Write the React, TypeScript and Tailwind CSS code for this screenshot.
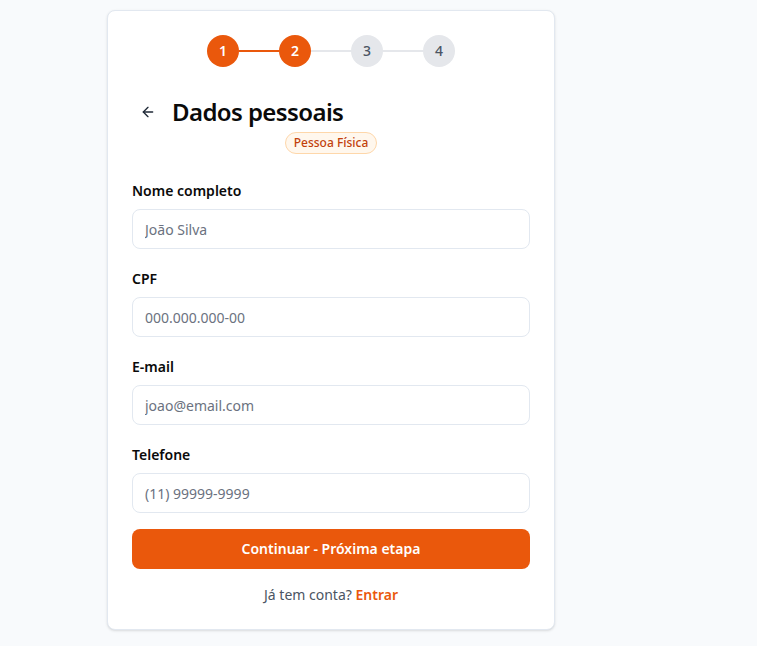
import { ArrowLeft } from "lucide-react";

const fields = [
  { label: "Nome completo", placeholder: "João Silva", type: "text" },
  { label: "CPF", placeholder: "000.000.000-00", type: "text" },
  { label: "E-mail", placeholder: "joao@email.com", type: "email" },
  { label: "Telefone", placeholder: "(11) 99999-9999", type: "tel" },
];

function Stepper({ current }: { current: number }) {
  const steps = [1, 2, 3, 4];
  return (
    <div className="flex items-center justify-center">
      {steps.map((s, i) => {
        const done = s <= current;
        return (
          <div key={s} className="flex items-center">
            <div
              className={
                done
                  ? "flex h-8 w-8 items-center justify-center rounded-full bg-[#ea580c] text-sm font-semibold text-white"
                  : "flex h-8 w-8 items-center justify-center rounded-full bg-[#e5e7eb] text-sm font-medium text-[#4b5563]"
              }
            >
              {s}
            </div>
            {i < steps.length - 1 ? (
              <div className={s < current ? "h-0.5 w-10 bg-[#ea580c]" : "h-0.5 w-10 bg-[#e5e7eb]"} />
            ) : null}
          </div>
        );
      })}
    </div>
  );
}

export default function App() {
  return (
    <div
      className="min-h-screen bg-[#f8fafc] pt-[10px] pl-[107px]"
      style={{ fontFamily: '"Noto Sans", "Open Sans", sans-serif' }}
    >
      <div className="w-[448px] rounded-lg border border-[#e2e8f0] bg-white p-6 shadow-sm">
        <Stepper current={2} />

        <div className="mt-[29px] flex items-center gap-2">
          <button className="flex h-8 w-8 items-center justify-center rounded-md text-[#1f2937]">
            <ArrowLeft className="h-4 w-4" strokeWidth={2} />
          </button>
          <h1 className="text-2xl font-semibold tracking-tight text-[#0a0a0a]">Dados pessoais</h1>
        </div>
        <div className="mt-[4px] flex justify-center">
          <span className="rounded-full border border-[#fed7aa] bg-[#fff7ed] px-2 py-0.5 text-xs font-medium text-[#c2410c]">
            Pessoa Física
          </span>
        </div>

        <form className="mt-[27px] flex flex-col gap-5" onSubmit={(e) => e.preventDefault()}>
          {fields.map((f) => (
            <div key={f.label}>
              <label className="mb-2 block text-sm font-semibold text-[#0a0a0a]">{f.label}</label>
              <input
                type={f.type}
                placeholder={f.placeholder}
                className="h-10 w-full rounded-lg border border-[#e2e8f0] bg-white px-3 text-sm text-[#111827] placeholder:text-[#6b7280] outline-none"
              />
            </div>
          ))}
          <button
            type="submit"
            className="-mt-1 h-10 w-full rounded-lg bg-[#ea580c] text-sm font-semibold text-white"
          >
            Continuar - Próxima etapa
          </button>
        </form>

        <p className="mt-4 text-center text-sm text-[#4b5563]">
          Já tem conta? <a className="font-semibold text-[#ea580c]">Entrar</a>
        </p>
      </div>
    </div>
  );
}
